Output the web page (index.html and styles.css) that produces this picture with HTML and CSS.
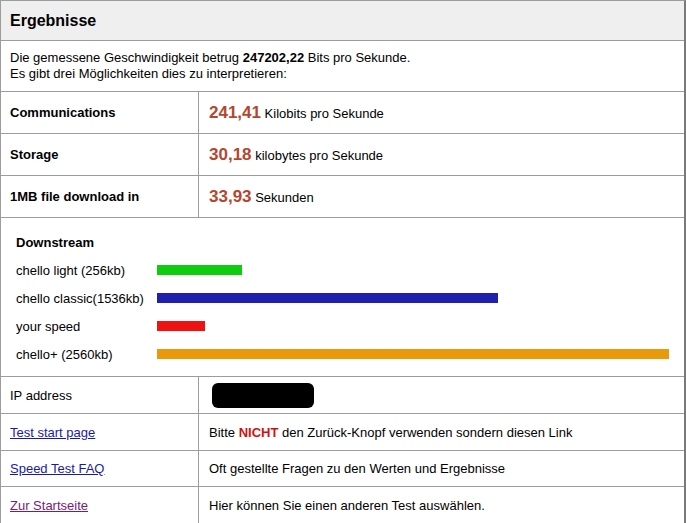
FILE: index.html
```html
<!DOCTYPE html>
<html lang="de">
<head>
	<meta charset="UTF-8">
	<title>Ergebnisse</title>
	<link rel="stylesheet" href="styles.css">
</head>
<body>
	<section class="panel">
		<div class="head">Ergebnisse</div>
		<div class="intro">
			Die gemessene Geschwindigkeit betrug <b>247202,22</b> Bits pro Sekunde.<br>
			Es gibt drei Möglichkeiten dies zu interpretieren:
		</div>

		<div class="row big">
			<div class="key"><b>Communications</b></div>
			<div class="val"><span><span class="num">241,41</span> Kilobits pro Sekunde</span></div>
		</div>
		<div class="row big">
			<div class="key"><b>Storage</b></div>
			<div class="val"><span><span class="num">30,18</span> kilobytes pro Sekunde</span></div>
		</div>
		<div class="row big">
			<div class="key"><b>1MB file download in</b></div>
			<div class="val"><span><span class="num">33,93</span> Sekunden</span></div>
		</div>

		<div class="chart">
			<div class="chart_title">Downstream</div>
			<div></div>
			<div>chello light (256kb)</div>
			<div><i class="bar green" style="width:85px"></i></div>
			<div>chello classic(1536kb)</div>
			<div><i class="bar blue" style="width:341px"></i></div>
			<div>your speed</div>
			<div><i class="bar red" style="width:48px"></i></div>
			<div>chello+ (2560kb)</div>
			<div><i class="bar orange" style="width:512px"></i></div>
		</div>

		<div class="row">
			<div class="key">IP address</div>
			<div class="val"><span class="blackout"></span></div>
		</div>
		<div class="row">
			<div class="key"><a href="#">Test start page</a></div>
			<div class="val"><span>Bitte <b class="warn">NICHT</b> den Zurück-Knopf verwenden sondern diesen Link</span></div>
		</div>
		<div class="row short">
			<div class="key"><a href="#">Speed Test FAQ</a></div>
			<div class="val"><span>Oft gestellte Fragen zu den Werten und Ergebnisse</span></div>
		</div>
		<div class="row short last">
			<div class="key"><a href="#" class="visited">Zur Startseite</a></div>
			<div class="val"><span>Hier können Sie einen anderen Test auswählen.</span></div>
		</div>
	</section>
</body>
</html>
```

FILE: styles.css
```css
*{margin:0; padding:0; box-sizing:border-box;}
body{
	background:#fff;
	font-family:"Liberation Sans", Arial, sans-serif;
	font-size:13px;
	color:#000;
}
.panel{
	width:686px;
	border:1px solid #9c9c9c;
	border-right:2px solid #7a7a7a;
	border-bottom:2px solid #7a7a7a;
}
.head{
	height:40px;
	padding-left:9px;
	display:flex;
	align-items:center;
	background:#efefef;
	border-bottom:1px solid #9c9c9c;
	font-size:16px;
	font-weight:bold;
}
.intro{
	height:51px;
	padding:9px 9px 0;
	line-height:16px;
	border-bottom:1px solid #9c9c9c;
}
.row{
	display:grid;
	grid-template-columns:198px 1fr;
	height:37px;
	border-bottom:1px solid #9c9c9c;
}
.row.big{height:42px;}
.row.short{height:36px;}
.row.last{border-bottom:none;}
.key, .val{
	display:flex;
	align-items:center;
}
.key{
	padding-left:9px;
	border-right:1px solid #9c9c9c;
}
.val{padding-left:10px;}
.num{
	font-size:17px;
	font-weight:bold;
	color:#b5462e;
}
.chart{
	display:grid;
	grid-template-columns:141px 1fr;
	grid-auto-rows:28px;
	align-items:center;
	height:159px;
	padding:10px 0 0 15px;
	border-bottom:1px solid #9c9c9c;
}
.chart_title{font-weight:bold;}
.bar{
	display:block;
	height:10px;
}
.green{background:#10cc10;}
.blue{background:#2020b0;}
.red{background:#ee1212;}
.orange{background:#e89a0c;}
.blackout{
	display:block;
	width:102px;
	height:25px;
	margin-left:3px;
	background:#000;
	border-radius:6px;
}
a{color:#1a1aa8;}
a.visited{color:#7a1a7a;}
.warn{color:#d41010;}
```
